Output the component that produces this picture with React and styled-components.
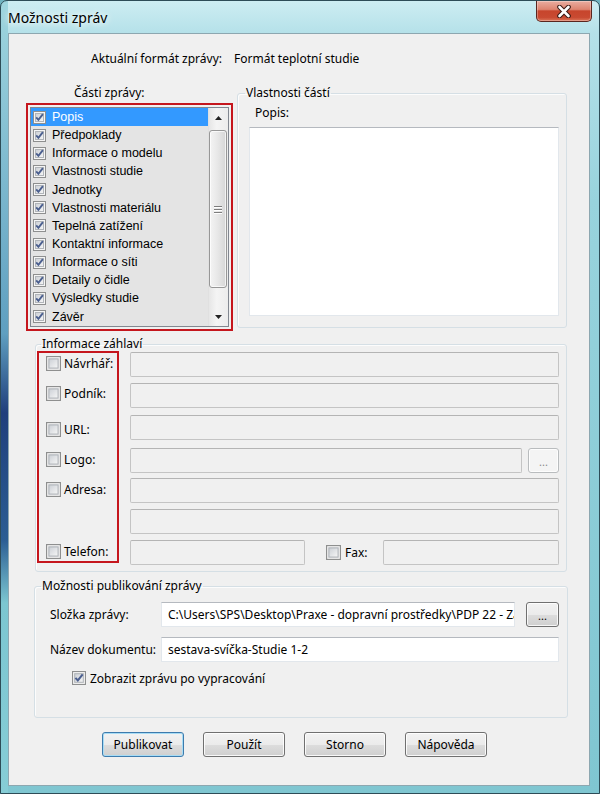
import React from 'react'
import styled, {createGlobalStyle} from 'styled-components'

const GlobalStyle = createGlobalStyle`
  html, body {
    margin:0;
    padding:0;
    background:#6fb3c0;
  }
  body {
    font-family:"Noto Sans", "DejaVu Sans", sans-serif;
    font-size:12px;
    color:#000;
  }
  * {
    box-sizing:border-box;
  }
`

const Window = styled.div`
    width:600px;
    height:794px;
    display:flex;
    flex-direction:column;
    border:1px solid #2d4c57;
    border-radius:7px 7px 0 0;
    padding:0 9px 7px 7px;
    background:
      linear-gradient(to bottom, #9fd6df 0%, #5f9fc0 42%, #1f3f7c 52%, #2b5d93 68%, #7cc6d1 76%, #86cdd6 100%) left top / 7px 100% no-repeat,
      linear-gradient(to bottom, #cdedf2 0px, #b5e1e9 32px, #98d3dd 200px, #7fc6d1 100%);
`

const TitleBar = styled.div`
    height:32px;
    display:flex;
    justify-content:space-between;
    align-items:flex-start;
`

const Title = styled.div`
    padding-top:8px;
    font-size:14px;
    line-height:18px;
    color:#000;
    text-shadow:0 0 6px rgba(255,255,255,.95), 0 0 10px rgba(255,255,255,.8);
`

const CloseButton = styled.div`
    width:56px;
    height:21px;
    margin-right:-2px;
    border:1px solid #5a261f;
    border-top:none;
    border-radius:0 0 5px 5px;
    background:linear-gradient(to bottom, #eaada0 0%, #dd8470 42%, #c7452c 50%, #c94a31 82%, #db7559 100%);
    box-shadow:inset 0 0 0 1px rgba(255,255,255,.3);
    display:flex;
    align-items:center;
    justify-content:center;
`

const Client = styled.div`
    flex:1;
    background:#f0f0f0;
    border:1px solid #8da7b0;
    display:flex;
    flex-direction:column;
    padding-top:17px;
`

const HeaderRow = styled.div`
    display:flex;
    line-height:16px;
`

const HeaderLabel = styled.div`
    width:213px;
    text-align:right;
`

const HeaderValue = styled.div`
    margin-left:12px;
`

const TopSection = styled.div`
    display:flex;
    align-items:flex-start;
    margin-top:18px;
    margin-left:17px;
`

const PartsColumn = styled.div`
    width:207px;
    display:flex;
    flex-direction:column;
`

const PartsHeading = styled.div`
    line-height:16px;
    padding-left:48px;
`

const RedFrame = styled.div`
    margin-top:2px;
    border:2px solid #c5161d;
    padding:2px;
`

const ListBox = styled.div`
    height:220px;
    border:1px solid #828790;
    background:#e4e4e4;
    display:flex;
`

const Items = styled.div`
    flex:1;
    overflow:hidden;
`

const ListItem = styled.div`
    height:18.15px;
    display:flex;
    align-items:center;
    gap:6px;
    padding-left:2px;
    font-family:"Liberation Sans", Arial, sans-serif;
    font-size:12.5px;
    background:${p => p.$selected ? '#3399ff' : 'transparent'};
    color:${p => p.$selected ? '#fff' : '#000'};
`

const ScrollBar = styled.div`
    width:20px;
    display:flex;
    flex-direction:column;
    background:linear-gradient(to right, #e6e6e6, #f4f4f4 40%, #ececec);
    border-left:1px solid #e0e0e0;
`

const ArrowCell = styled.div`
    height:${p => p.$h}px;
    display:flex;
    align-items:center;
    justify-content:center;
`

const Track = styled.div`
    flex:1;
    padding-top:2px;
`

const Thumb = styled.div`
    height:158px;
    margin:0 1px 0 0;
    border:1px solid #979797;
    border-radius:3px;
    background:linear-gradient(to right, #f4f4f4 0%, #e8e8e8 45%, #d6d6d6 100%);
    box-shadow:inset 0 0 0 1px rgba(255,255,255,.7);
    display:flex;
    flex-direction:column;
    align-items:center;
    justify-content:center;
    gap:2px;
`

const Grip = styled.div`
    width:8px;
    height:1px;
    background:#7d7d7d;
    box-shadow:0 1px 0 #fff;
`

const GroupBox = styled.fieldset`
    margin:0;
    padding:0;
    min-width:0;
    border:1px solid #d5dfe5;
    border-radius:3px;
    box-shadow:inset 1px 1px 0 rgba(255,255,255,.8);
`

const PropsGroup = styled(GroupBox)`
    width:330px;
    margin-left:4px;
`

const InfoGroup = styled(GroupBox)`
    width:532px;
    margin:5px 0 0 26px;
`

const PublishGroup = styled(GroupBox)`
    width:534px;
    margin:6px 0 0 25px;
`

const Legend = styled.legend`
    margin-left:${p => p.$offset}px;
    padding:0 1px;
    line-height:16px;
    font-size:12px;
`

const PropsBody = styled.div`
    padding:4px 7px 11px 11px;
`

const PopisLabel = styled.div`
    line-height:16px;
    margin-left:6px;
`

const WhiteArea = styled.div`
    margin-top:6px;
    height:189px;
    background:#fff;
    border:1px solid #e2e7ec;
    border-top-color:#b5b9bf;
`

const ROWS = '31px 32px 33px 30px 31px 31px 26px'

const InfoBody = styled.div`
    display:grid;
    grid-template-columns:82px 1fr;
    grid-template-rows:${ROWS};
    column-gap:11px;
    padding:0 7px 5px 1px;
`

const CheckColumn = styled.div`
    grid-column:1;
    grid-row:1 / -1;
    margin:-1px 0 3px 0;
    border:2px solid #c5161d;
    display:grid;
    grid-template-rows:30px 36px 30px 30px 31px 31px 1fr;
`

const CheckRow = styled.label`
    height:20px;
    display:flex;
    align-items:center;
    gap:3px;
    padding-left:7px;
`

const FieldRow = styled.div`
    grid-column:2;
    display:flex;
    align-items:flex-start;
`

const Field = styled.div`
    height:25px;
    flex:${p => p.$w ? 'none' : '1'};
    width:${p => p.$w ? p.$w + 'px' : 'auto'};
    min-width:0;
    background:${p => p.$white ? '#fff' : '#f0f0f0'};
    border:1px solid ${p => p.$white ? '#e2e7ec' : '#c4c4c4'};
    border-top-color:${p => p.$white ? '#b5b9bf' : '#b4b4b4'};
    border-radius:${p => p.$white ? '0' : '2px'};
    padding:0 6px;
    line-height:23px;
    white-space:nowrap;
    overflow:hidden;
`

const DotsButton = styled.div`
    width:${p => p.$w}px;
    height:25px;
    flex:none;
    margin-left:${p => p.$gap}px;
    border:1px solid ${p => p.$disabled ? '#b9bcbe' : '#707070'};
    border-radius:3px;
    background:${p => p.$disabled
      ? '#f4f4f4'
      : 'linear-gradient(to bottom, #f2f2f2 0%, #ebebeb 50%, #dddddd 51%, #cfcfcf 100%)'};
    box-shadow:inset 0 0 0 1px rgba(255,255,255,.8);
    color:${p => p.$disabled ? '#8a8a8a' : '#000'};
    font-size:11px;
    line-height:25px;
    text-align:center;
`

const FaxLabel = styled.label`
    height:25px;
    display:flex;
    align-items:center;
    gap:4px;
    margin:0 0 0 21px;
    width:57px;
`

const PublishBody = styled.div`
    padding:8px 8px 30px 15px;
    display:flex;
    flex-direction:column;
`

const PublishRow = styled.div`
    display:flex;
    align-items:center;
    margin-top:${p => p.$mt}px;
`

const PublishLabel = styled.div`
    width:111px;
    flex:none;
`

const ShowRow = styled.label`
    height:18px;
    display:flex;
    align-items:center;
    gap:4px;
    padding-left:22px;
    margin-top:7px;
`

const ButtonRow = styled.div`
    display:flex;
    gap:19px;
    margin:14px 0 0 93px;
`

const Button = styled.button`
    width:82px;
    height:25px;
    padding:0;
    font-family:"Noto Sans", sans-serif;
    font-size:12px;
    color:#000;
    border:1px solid ${p => p.$default ? '#3d7bad' : '#707070'};
    border-radius:3px;
    background:linear-gradient(to bottom, #f2f2f2 0%, #ebebeb 50%, #dddddd 51%, #cfcfcf 100%);
    box-shadow:inset 0 0 0 1px ${p => p.$default ? '#a7dcf5' : 'rgba(255,255,255,.85)'};
`

const CheckSvg = styled.svg`
    flex:none;
    display:block;
`

function CheckBox({checked, size}) {
  return (
    <CheckSvg width={size} height={size} viewBox="0 0 13 13">
      <defs>
        <linearGradient id="cbFill" x1="0" y1="0" x2="1" y2="1">
          <stop offset="0" stopColor="#cbcfd5" />
          <stop offset="1" stopColor="#f7f7f7" />
        </linearGradient>
      </defs>
      <rect x="0.5" y="0.5" width="12" height="12" fill="#f5f5f5" stroke="#8e8f8f" />
      <rect x="2.5" y="2.5" width="8" height="8" fill="url(#cbFill)" stroke="#b1b5ba" />
      {checked && (
        <path d="M3.2 6.4 L5.4 8.8 L9.9 3.1" fill="none" stroke="#4b5f8f" strokeWidth="1.9" />
      )}
    </CheckSvg>
  )
}

const parts = [
  'Popis',
  'Předpoklady',
  'Informace o modelu',
  'Vlastnosti studie',
  'Jednotky',
  'Vlastnosti materiálu',
  'Tepelná zatížení',
  'Kontaktní informace',
  'Informace o síti',
  'Detaily o čidle',
  'Výsledky studie',
  'Závěr',
]

const headerChecks = ['Návrhář:', 'Podník:', 'URL:', 'Logo:', 'Adresa:', '', 'Telefon:']

function App() {
  return (
    <>
      <GlobalStyle />
      <Window>
        <TitleBar>
          <Title>Možnosti zpráv</Title>
          <CloseButton>
            <svg width="16" height="13" viewBox="0 0 16 13">
              <path d="M3.5 2 L12.5 11 M12.5 2 L3.5 11" stroke="#3a1a15" strokeWidth="4.6" strokeLinecap="round" />
              <path d="M3.5 2 L12.5 11 M12.5 2 L3.5 11" stroke="#fff" strokeWidth="2.6" strokeLinecap="round" />
            </svg>
          </CloseButton>
        </TitleBar>

        <Client>
          <HeaderRow>
            <HeaderLabel>Aktuální formát zprávy:</HeaderLabel>
            <HeaderValue>Formát teplotní studie</HeaderValue>
          </HeaderRow>

          <TopSection>
            <PartsColumn>
              <PartsHeading>Části zprávy:</PartsHeading>
              <RedFrame>
                <ListBox>
                  <Items>
                    {parts.map((p, i) => (
                      <ListItem key={p} $selected={i === 0}>
                        <CheckBox checked size={13} />
                        <span>{p}</span>
                      </ListItem>
                    ))}
                  </Items>
                  <ScrollBar>
                    <ArrowCell $h={20}>
                      <svg width="7" height="4" viewBox="0 0 7 4"><path d="M0 4 L3.5 0 L7 4 Z" fill="#222" /></svg>
                    </ArrowCell>
                    <Track>
                      <Thumb>
                        <Grip />
                        <Grip />
                        <Grip />
                      </Thumb>
                    </Track>
                    <ArrowCell $h={18}>
                      <svg width="7" height="4" viewBox="0 0 7 4"><path d="M0 0 L7 0 L3.5 4 Z" fill="#222" /></svg>
                    </ArrowCell>
                  </ScrollBar>
                </ListBox>
              </RedFrame>
            </PartsColumn>

            <PropsGroup>
              <Legend $offset={7}>Vlastnosti částí</Legend>
              <PropsBody>
                <PopisLabel>Popis:</PopisLabel>
                <WhiteArea />
              </PropsBody>
            </PropsGroup>
          </TopSection>

          <InfoGroup>
            <Legend $offset={5}>Informace záhlaví</Legend>
            <InfoBody>
              <CheckColumn>
                {headerChecks.map((c, i) => (
                  c ? (
                    <CheckRow key={i}>
                      <CheckBox size={15} />
                      <span>{c}</span>
                    </CheckRow>
                  ) : <div key={i} />
                ))}
              </CheckColumn>
              <FieldRow><Field /></FieldRow>
              <FieldRow><Field /></FieldRow>
              <FieldRow><Field /></FieldRow>
              <FieldRow>
                <Field />
                <DotsButton $w={31} $gap={6} $disabled>...</DotsButton>
              </FieldRow>
              <FieldRow><Field /></FieldRow>
              <FieldRow><Field /></FieldRow>
              <FieldRow>
                <Field $w={175} />
                <FaxLabel>
                  <CheckBox size={15} />
                  <span>Fax:</span>
                </FaxLabel>
                <Field />
              </FieldRow>
            </InfoBody>
          </InfoGroup>

          <PublishGroup>
            <Legend $offset={6}>Možnosti publikování zprávy</Legend>
            <PublishBody>
              <PublishRow $mt={0}>
                <PublishLabel>Složka zprávy:</PublishLabel>
                <Field $white>C:\Users\SPS\Desktop\Praxe - dopravní prostředky\PDP 22 - Za</Field>
                <DotsButton $w={33} $gap={11}>...</DotsButton>
              </PublishRow>
              <PublishRow $mt={10}>
                <PublishLabel>Název dokumentu:</PublishLabel>
                <Field $white>sestava-svíčka-Studie 1-2</Field>
              </PublishRow>
              <ShowRow>
                <CheckBox checked size={14} />
                <span>Zobrazit zprávu po vypracování</span>
              </ShowRow>
            </PublishBody>
          </PublishGroup>

          <ButtonRow>
            <Button $default>Publikovat</Button>
            <Button>Použít</Button>
            <Button>Storno</Button>
            <Button>Nápověda</Button>
          </ButtonRow>
        </Client>
      </Window>
    </>
  )
}

export default App
